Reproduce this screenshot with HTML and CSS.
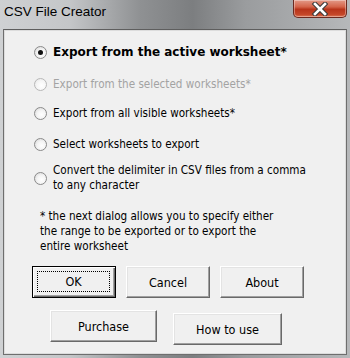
FILE: index.html
```html
<!DOCTYPE html>
<html>
<head>
<meta charset="utf-8">
<link rel="stylesheet" href="styles.css">
</head>
<body>
<div class="window">
  <div class="titlebar">
    <span class="title">CSV File Creator</span>
    <div class="close">
      <svg width="20" height="14" viewBox="0 0 20 14">
        <path d="M5 2 L15 12 M15 2 L5 12" stroke="#3a3a3a" stroke-width="4.6" stroke-linecap="square"/>
        <path d="M5 2 L15 12 M15 2 L5 12" stroke="#ffffff" stroke-width="2.6" stroke-linecap="square"/>
      </svg>
    </div>
  </div>
  <div class="client">
    <div class="options">
      <div class="opt r1"><span class="radio checked"></span><span class="label bold">Export from the active worksheet*</span></div>
      <div class="opt r2"><span class="radio disabled"></span><span class="label dis">Export from the selected worksheets*</span></div>
      <div class="opt r3"><span class="radio"></span><span class="label">Export from all visible worksheets*</span></div>
      <div class="opt r4"><span class="radio"></span><span class="label">Select worksheets to export</span></div>
      <div class="opt r5"><span class="radio"></span><span class="label">Convert the delimiter in CSV files from a comma<br>to any character</span></div>
    </div>
    <p class="note">* the next dialog allows you to specify either<br>the range to be exported or to export the<br>entire worksheet</p>
    <div class="btnrow row1">
      <button class="btn default w84"><span class="focus">OK</span></button>
      <button class="btn w84">Cancel</button>
      <button class="btn w84">About</button>
    </div>
    <div class="btnrow row2">
      <button class="btn purchase">Purchase</button>
      <button class="btn howto">How to use</button>
    </div>
  </div>
</div>
</body>
</html>
```

FILE: styles.css
```css
html, body {
  margin: 0;
  padding: 0;
}
body {
  width: 350px;
  height: 358px;
  overflow: hidden;
  background: #dde0e3;
  font-family: "DejaVu Sans Condensed", "DejaVu Sans", sans-serif;
}
.window {
  width: 350px;
  height: 358px;
  display: flex;
  flex-direction: column;
  background: linear-gradient(90deg, #cfd1d3 0%, #c4c6c8 20%, #8f9193 40%, #7c7e80 55%, #9a9c9e 70%, #a8aaac 85%, #b6b8ba 100%);
}
.titlebar {
  height: 29px;
  flex: none;
  display: flex;
  align-items: flex-start;
  justify-content: space-between;
}
.title {
  font-family: "Liberation Sans", sans-serif;
  font-size: 13.5px;
  color: #000;
  margin: 4px 0 0 4px;
  line-height: 16px;
}
.close {
  width: 54px;
  height: 18px;
  margin-right: 3px;
  box-sizing: border-box;
  border: 1px solid #6b2a20;
  border-top: none;
  border-radius: 0 0 5px 5px;
  background: linear-gradient(180deg, #e39a88 0%, #d4644a 40%, #b8341a 55%, #c44628 85%, #dc7656 100%);
  box-shadow: inset 0 0 0 1px rgba(255,255,255,0.35);
  display: flex;
  align-items: center;
  justify-content: center;
}
.client {
  flex: none;
  margin: 0 3px;
  height: 326px;
  box-sizing: border-box;
  background: #f0f0f0;
  border: 1px solid #6e6e6e;
  border-top-color: #5e5e5e;
  box-shadow: inset 0 0 0 1px #dcdcdc;
  display: flex;
  flex-direction: column;
}
.options {
  display: flex;
  flex-direction: column;
  padding: 15px 0 0 30px;
}
.opt {
  display: flex;
  align-items: center;
  font-size: 11.6px;
  line-height: 15px;
  color: #000;
}
.r2 { margin-top: 17px; }
.r3 { margin-top: 14px; }
.r4 { margin-top: 16px; }
.r5 { margin-top: 11px; }
.radio {
  flex: none;
  width: 13px;
  height: 13px;
  box-sizing: border-box;
  border-radius: 50%;
  border: 1px solid #8a8a8a;
  background: radial-gradient(circle at 60% 60%, #ffffff 0%, #f4f4f4 45%, #d2d2d2 100%);
  margin-right: 6px;
  position: relative;
}
.radio.checked::after {
  content: "";
  position: absolute;
  left: 3px;
  top: 3px;
  width: 5px;
  height: 5px;
  border-radius: 50%;
  background: #111;
}
.radio.disabled {
  border-color: #b8b8b8;
  background: radial-gradient(circle at 60% 60%, #ffffff 0%, #f6f6f6 50%, #e2e2e2 100%);
}
.label.bold {
  font-family: "DejaVu Sans", sans-serif;
  font-size: 12px;
  font-weight: bold;
}
.label.dis { color: #a3a3a3; }
.note {
  margin: 16px 0 0 36px;
  font-size: 11.6px;
  line-height: 15px;
  color: #000;
}
.btnrow {
  display: flex;
}
.row1 {
  margin: 12px 0 0 28px;
  gap: 10px;
}
.row2 {
  margin: 12px 0 0 46px;
  gap: 16px;
  align-items: flex-start;
}
.btn {
  font-family: "DejaVu Sans Condensed", "DejaVu Sans", sans-serif;
  font-size: 12.5px;
  color: #000;
  background: #f0f0f0;
  height: 32px;
  box-sizing: border-box;
  padding: 0;
  border: 1px solid;
  border-color: #fff #696969 #696969 #fff;
  box-shadow: inset -1px -1px 0 #a0a0a0, inset 1px 1px 0 #e3e3e3;
  display: flex;
  align-items: center;
  justify-content: center;
}
.w84 { width: 84px; }
.btn.default {
  border: 1px solid #000;
  box-shadow: inset 1px 1px 0 #fff, inset -1px -1px 0 #696969, inset -2px -2px 0 #a0a0a0;
  position: relative;
}
.btn.default .focus {
  position: absolute;
  left: 4px;
  top: 4px;
  right: 5px;
  bottom: 5px;
  border: 1px dotted #000;
  display: flex;
  align-items: center;
  justify-content: center;
}
.purchase { width: 107px; }
.howto { width: 109px; margin-top: 3px; }
```
